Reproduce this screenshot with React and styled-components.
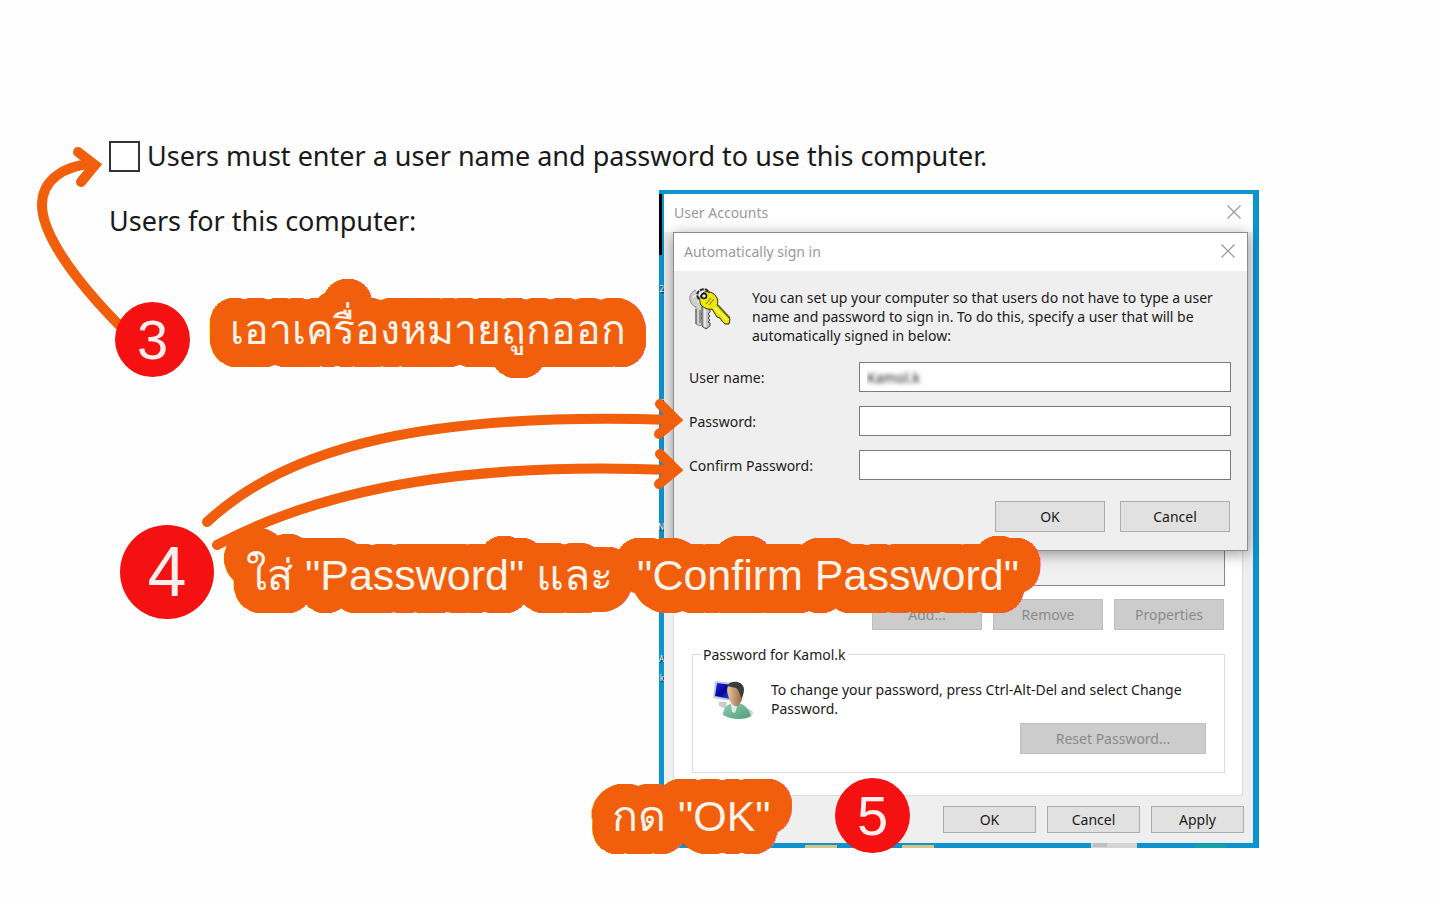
import { Fragment } from "react";
import styled, { createGlobalStyle } from "styled-components";

export default function App() {
  return (
    <Page>
      <GlobalStyle />
      <CheckRow>
        <BigCheckbox type="checkbox" id="must-enter" />
        <BigLabel htmlFor="must-enter">
          Users must enter a user name and password to use this computer.
        </BigLabel>
      </CheckRow>
      <Body>
        <Caption>Users for this computer:</Caption>
        <Desktop>
          <DesktopEdge aria-hidden="true">
            {edgeLetters.map(([top, letter]) => (
              <EdgeLetter key={top} style={{ top }}>
                {letter}
              </EdgeLetter>
            ))}
          </DesktopEdge>
          <UserAccounts />
          <Taskbar aria-hidden="true">
            <rect x="141" y="2" width="32" height="3" fill="#d8c583" />
            <rect x="238" y="2" width="32" height="3" fill="#d8c583" />
            <rect x="427" width="46" height="5" fill="#d2d4d6" />
            <rect x="429" width="14" height="4" fill="#bdbfc1" />
            <rect x="531" y="1" width="32" height="4" fill="#10a3a8" />
          </Taskbar>
        </Desktop>
      </Body>
      <Annotations />
    </Page>
  );
}

function UserAccounts() {
  return (
    <Window>
      <TitleBar>
        <Title>User Accounts</Title>
        <CloseButton />
      </TitleBar>
      <TabPanel>
        <UserList />
        <UserActions>
          <Button disabled>Add...</Button>
          <Button disabled>Remove</Button>
          <Button disabled>Properties</Button>
        </UserActions>
        <PasswordGroup>
          <GroupLegend>Password for Kamol.k</GroupLegend>
          <GroupRow>
            <UserIcon />
            <Text>
              To change your password, press Ctrl-Alt-Del and select Change Password.
            </Text>
          </GroupRow>
          <ResetButton disabled>Reset Password...</ResetButton>
        </PasswordGroup>
      </TabPanel>
      <Footer>
        <FooterButton>OK</FooterButton>
        <FooterButton>Cancel</FooterButton>
        <FooterButton>Apply</FooterButton>
      </Footer>
      <SignInDialog />
    </Window>
  );
}

function SignInDialog() {
  return (
    <Dialog>
      <TitleBar>
        <Title>Automatically sign in</Title>
        <CloseButton />
      </TitleBar>
      <Intro>
        <KeysIcon />
        <Text>
          You can set up your computer so that users do not have to type a user name and
          password to sign in. To do this, specify a user that will be automatically signed
          in below:
        </Text>
      </Intro>
      <Fields>
        {fields.map(({ id, label, type, value }) => (
          <Fragment key={id}>
            <label htmlFor={id}>{label}</label>
            <Field id={id} type={type} defaultValue={value} $hidden={id === "user"} />
          </Fragment>
        ))}
      </Fields>
      <DialogActions>
        <Button>OK</Button>
        <Button>Cancel</Button>
      </DialogActions>
    </Dialog>
  );
}

function CloseButton() {
  return (
    <IconButton aria-label="Close">
      <svg width="14" height="14" viewBox="0 0 14 14" stroke="#999" strokeWidth="1.2">
        <path d="M0.5 0.5L13.5 13.5M13.5 0.5L0.5 13.5" />
      </svg>
    </IconButton>
  );
}

function Annotations() {
  return (
    <>
      <Arrows aria-hidden="true">
        <path d="M119 325C70 275 42 232 42 205C42 180 64 166 90 164" />
        <path d="M78 152L95 165L81 182" />
        <path d="M207 522C290 445 430 412 672 420" />
        <path d="M660 404L676 420L659 434" />
        <path d="M217 545C330 485 480 462 672 470" />
        <path d="M660 454L676 470L659 484" />
      </Arrows>
      <Badge $x={115} $y={302} $size={75}>3</Badge>
      <Badge $x={120} $y={525} $size={94} $large>4</Badge>
      <Badge $x={835} $y={778} $size={75}>5</Badge>
      <Note $x={230} $y={300} $small>เอาเครื่องหมายถูกออก</Note>
      <Note $x={246} $y={545}>ใส่ "Password" และ&nbsp; "Confirm Password"</Note>
      <Note $x={612} $y={786}>กด "OK"</Note>
    </>
  );
}

function KeysIcon() {
  return (
    <svg width="44" height="44" viewBox="0 0 44 44">
      <path
        d="M8 2C3 4 1 8 2 12c1 4 3 6 6 7v17l4 2 3-3v-3l-2-2 2-2-2-2 2-2v-8"
        fill="#d0d0d0"
        stroke="#8a8a8a"
      />
      <path
        d="M14 18v20l4 3 4-3v-3l-2-1 2-2-2-2 2-2-2-2 2-2v-8z"
        fill="#c4c4c4"
        stroke="#444"
      />
      <path d="M8 21v15M12 22v13" stroke="#555" />
      <path d="M17 20v19" stroke="#f4f4f4" strokeWidth="1.5" />
      <path d="M5 9l6-3v9" fill="none" stroke="#efefef" strokeWidth="2" />
      <path
        d="M15 5c4-3 11-1 14 5 1 3 1 5 0 7l13 14-1 5h-4l-3-3-2-3-3-1-5-8c-4 1-8-1-11-4-2-4-2-9 2-12z"
        fill="#eee60c"
        stroke="#2a2a10"
      />
      <path d="M18 16l5-6M21 17l5-6" stroke="#76700c" />
      <path d="M26 19l13 13" stroke="#fffb7a" strokeWidth="1.5" />
      <path d="M30 17l12 13" stroke="#6e690b" strokeWidth="1.5" />
      <circle cx="16" cy="8" r="2.5" fill="#e8e8e8" stroke="#111" strokeWidth="1.5" />
      <path
        d="M11 11c-3-3-2-8 2-9 3-2 7 0 8 3"
        fill="none"
        stroke="#222"
        strokeWidth="2"
        strokeDasharray="4 1"
      />
    </svg>
  );
}

function UserIcon() {
  return (
    <svg width="40" height="40" viewBox="0 0 40 40">
      <defs>
        <linearGradient id="screen" x1="0" y1="0" x2="1" y2="1">
          <stop offset="0" stopColor="#1a2bd8" />
          <stop offset="0.5" stopColor="#04069a" />
          <stop offset="1" stopColor="#3c55e6" />
        </linearGradient>
        <linearGradient id="skin" x1="0" y1="0" x2="1" y2="0">
          <stop offset="0" stopColor="#e8c9a0" />
          <stop offset="1" stopColor="#8d6138" />
        </linearGradient>
        <linearGradient id="shirt" x1="0" y1="0" x2="1" y2="1">
          <stop offset="0" stopColor="#8fd0b2" />
          <stop offset="1" stopColor="#4f9c7c" />
        </linearGradient>
      </defs>
      <ellipse cx="30" cy="33" rx="10" ry="5" fill="#d4d4d4" />
      <path d="M6 22l8 0-1 7-7-3z" fill="#c9ccd2" />
      <path d="M2 1l20 2-4 18L0 18z" fill="#c3cbe0" />
      <path d="M4 3l16 2-3 14L2 16z" fill="url(#screen)" />
      <path
        d="M10 35c0-7 4-11 11-12 8-1 14 4 17 13-5 4-20 4-28-1z"
        fill="url(#shirt)"
      />
      <path d="M18 24l3-2 4 2-3 9-3-1z" fill="#dcefe6" />
      <path d="M15 6c4-4 13-4 15 2 1 6-1 14-5 18-3 1-6-1-8-5-2-5-4-11-2-15z" fill="url(#skin)" />
      <path d="M14 6c3-6 16-6 17 3 0 4-1 7-3 9-1-5-3-9-5-10-3-1-6-1-9-2z" fill="#3a3c3a" />
    </svg>
  );
}

/* DATA */
const fields = [
  { id: "user", label: "User name:", type: "text", value: "Kamol.k" },
  { id: "password", label: "Password:", type: "password", value: "" },
  { id: "confirm", label: "Confirm Password:", type: "password", value: "" },
];

const edgeLetters = [
  [85, "2"],
  [197, "c"],
  [323, "N"],
  [455, "A"],
  [474, "k"],
];

// rings of hard shadows add up to the thick round outline behind the note text
const outline = [3, 6, 9, 12, 15, 18, 21, 23]
  .flatMap((radius) => {
    const steps = radius * 6;
    return Array.from({ length: steps }, (_, i) => {
      const angle = (i * 2 * Math.PI) / steps;
      const x = Math.round(radius * Math.cos(angle));
      const y = Math.round(radius * Math.sin(angle));
      return `${x}px ${y}px 0 #f25f0c`;
    });
  })
  .filter((shadow, i, all) => all.indexOf(shadow) === i)
  .join(", ");

/* STYLES */
const GlobalStyle = createGlobalStyle`
  * {
    box-sizing: border-box;
  }

  body {
    margin: 0;
    background: #fefefe;
    color: #1a1a1a;
    font: 14px/19px "Noto Sans", "Open Sans", sans-serif;
  }

  button,
  input {
    font: inherit;
    color: inherit;
  }
`;

const Page = styled.main`
  position: relative;
  min-height: 100vh;
  padding: 140px 181px 52px 109px;
`;

const CheckRow = styled.div`
  display: flex;
  align-items: center;
  gap: 7px;
  height: 32px;
`;

const BigCheckbox = styled.input`
  appearance: none;
  flex: none;
  width: 31px;
  height: 31px;
  margin: 0;
  border: 2px solid #333;
  background: #fff;
`;

const BigLabel = styled.label`
  font-size: 27px;
  line-height: 30px;
  white-space: nowrap;
`;

const Body = styled.div`
  display: flex;
  margin-top: 18px;
`;

const Caption = styled.p`
  flex: 0 0 550px;
  margin: 16px 0 0;
  font-size: 27px;
  line-height: 30px;
`;

const Desktop = styled.div`
  position: relative;
  flex: 1;
  min-width: 600px;
  padding: 4px 6px 0 5px;
  background: #0d93d0;
`;

const DesktopEdge = styled.div`
  position: absolute;
  top: 4px;
  bottom: 0;
  left: 0;
  width: 5px;
  background: linear-gradient(#000, #000) no-repeat 0 0 / 3px 61px;
`;

const EdgeLetter = styled.span`
  position: absolute;
  right: 0;
  color: #fff;
  font-size: 8px;
  text-shadow: 1px 1px 1px #000;
`;

const Taskbar = styled.svg`
  display: block;
  width: 100%;
  height: 5px;
`;

const Window = styled.section`
  position: relative;
  background: #efefef;
`;

const TitleBar = styled.header`
  display: flex;
  align-items: center;
  justify-content: space-between;
  height: 38px;
  padding: 0 12px 2px 10px;
  background: #fff;
`;

const Title = styled.h2`
  margin: 0;
  color: #999;
  font-size: 14px;
  font-weight: 400;
`;

const IconButton = styled.button`
  display: flex;
  padding: 0;
  border: 0;
  background: none;
`;

const TabPanel = styled.div`
  margin: 0 10px 0 9px;
  padding: 0 17px 22px 18px;
  border: 1px solid #dcdcdc;
  background: #fff;
`;

const UserList = styled.div`
  height: 353px;
  border: 1px solid #828790;
  background: #f0f0f0;
`;

const UserActions = styled.div`
  display: flex;
  justify-content: flex-end;
  gap: 11px;
  padding: 13px 1px 0 0;
`;

const Button = styled.button`
  width: 110px;
  height: 31px;
  padding: 0 0 1px;
  border: 1px solid #adadad;
  background: #e1e1e1;

  &:disabled {
    border-color: #bfbfbf;
    background: #ccc;
    color: #8b8b8b;
  }
`;

const PasswordGroup = styled.fieldset`
  display: flex;
  flex-direction: column;
  gap: 3px;
  min-height: 127px;
  margin: 15px 0 0;
  padding: 16px 18px 18px 20px;
  border: 1px solid #dcdcdc;
`;

const GroupLegend = styled.legend`
  margin-left: -12px;
  padding: 0 2px;
`;

const GroupRow = styled.div`
  display: flex;
  gap: 18px;
`;

const Text = styled.p`
  flex: 1;
  margin: 0;
`;

const ResetButton = styled(Button)`
  align-self: flex-end;
  width: 186px;
`;

const Footer = styled.footer`
  display: flex;
  justify-content: flex-end;
  gap: 11px;
  padding: 10px 9px;
`;

const FooterButton = styled(Button)`
  width: 93px;
  height: 27px;
`;

const Dialog = styled.section`
  position: absolute;
  top: 38px;
  right: 5px;
  left: 9px;
  padding-bottom: 18px;
  border: 1px solid #8c8c8c;
  background: #efefef;
  box-shadow: 0 3px 14px rgba(0, 0, 0, 0.4);
`;

const Intro = styled.div`
  display: flex;
  gap: 20px;
  padding: 17px 16px 0 14px;
`;

const Fields = styled.div`
  display: grid;
  grid-template-columns: 170px 1fr;
  row-gap: 14px;
  align-items: center;
  padding: 17px 16px 0 15px;
`;

const Field = styled.input`
  width: 100%;
  height: 30px;
  padding: 0 7px;
  border: 1px solid #7a7a7a;
  background: #fff;
  ${({ $hidden }) => $hidden && "color: transparent; text-shadow: 0 0 4px #222;"}
`;

const DialogActions = styled.div`
  display: flex;
  justify-content: flex-end;
  gap: 15px;
  padding: 21px 17px 0;
`;

const Arrows = styled.svg`
  position: absolute;
  top: 0;
  left: 0;
  width: 700px;
  height: 600px;
  fill: none;
  stroke: #f25f0c;
  stroke-width: 10;
  stroke-linecap: round;
  pointer-events: none;
`;

const Badge = styled.span`
  position: absolute;
  top: ${({ $y }) => $y}px;
  left: ${({ $x }) => $x}px;
  width: ${({ $size }) => $size}px;
  height: ${({ $size }) => $size}px;
  border-radius: 50%;
  background: #f51111;
  color: #fdeeee;
  font-family: "Liberation Sans", sans-serif;
  font-size: ${({ $large }) => ($large ? 70 : 56)}px;
  line-height: ${({ $size }) => $size}px;
  text-align: center;
`;

const Note = styled.p`
  position: absolute;
  top: ${({ $y }) => $y}px;
  left: ${({ $x }) => $x}px;
  margin: 0;
  color: #fff3ea;
  font-family: "Liberation Sans", sans-serif;
  font-size: ${({ $small }) => ($small ? 41 : 43)}px;
  line-height: 60px;
  white-space: nowrap;
  text-shadow: ${outline};
`;
